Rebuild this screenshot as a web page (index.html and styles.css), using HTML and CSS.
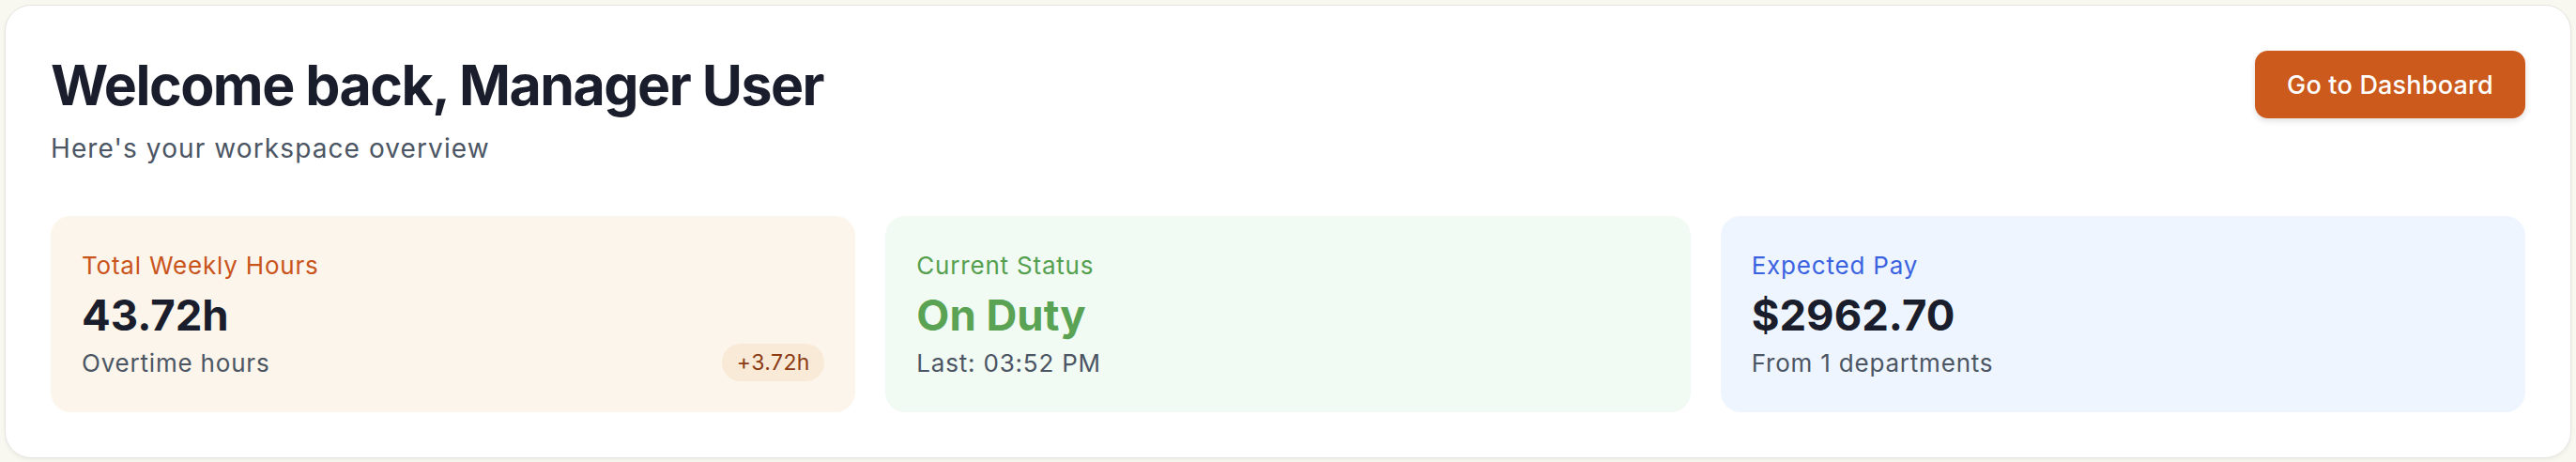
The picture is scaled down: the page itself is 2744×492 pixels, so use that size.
FILE: index.html
```html
<!DOCTYPE html>
<html lang="en">
<head>
<meta charset="utf-8">
<title>Workspace overview</title>
<link rel="stylesheet" href="styles.css">
</head>
<body>
<section class="welcome">
  <header class="welcome-head">
    <div class="welcome-text">
      <h1 class="welcome-title">Welcome back, Manager User</h1>
      <p class="welcome-sub">Here's your workspace overview</p>
    </div>
    <button class="btn-primary" type="button">Go to Dashboard</button>
  </header>
  <div class="stats">
    <div class="stat stat-orange">
      <div class="stat-label">Total Weekly Hours</div>
      <div class="stat-value">43.72h</div>
      <div class="stat-foot">
        <span class="stat-note">Overtime hours</span>
        <span class="badge">+3.72h</span>
      </div>
    </div>
    <div class="stat stat-green">
      <div class="stat-label">Current Status</div>
      <div class="stat-value">On Duty</div>
      <div class="stat-foot">
        <span class="stat-note">Last: 03:52 PM</span>
      </div>
    </div>
    <div class="stat stat-blue">
      <div class="stat-label">Expected Pay</div>
      <div class="stat-value">$2962.70</div>
      <div class="stat-foot">
        <span class="stat-note">From 1 departments</span>
      </div>
    </div>
  </div>
</section>
</body>
</html>
```

FILE: styles.css
```css
* { box-sizing: border-box; }

html, body {
  margin: 0;
  padding: 0;
}

body {
  background: #f9f8f0;
  padding: 5px;
  font-family: Inter, "Noto Sans", "Liberation Sans", sans-serif;
  color: #1a1e2c;
}

.welcome {
  background: #ffffff;
  border: 1px solid #e4e4e2;
  border-radius: 28px;
  box-shadow: 0 2px 4px rgba(0, 0, 0, 0.05);
  padding: 48px;
}

.welcome-head {
  display: flex;
  justify-content: space-between;
  align-items: flex-start;
  margin-bottom: 51px;
}

.welcome-title {
  margin: 0;
  font-size: 59px;
  line-height: 74px;
  font-weight: 700;
  letter-spacing: -1.5px;
  color: #1a1e2c;
}

.welcome-sub {
  margin: 9px 0 0;
  font-size: 28px;
  line-height: 42px;
  letter-spacing: 1.1px;
  color: #4b5563;
}

.btn-primary {
  height: 72px;
  padding: 0 34px;
  border: none;
  border-radius: 14px;
  background: #cb5a1c;
  color: #ffffff;
  font-family: inherit;
  font-size: 27px;
  font-weight: 500;
  letter-spacing: 0.2px;
  box-shadow: 0 3px 6px rgba(0, 0, 0, 0.12);
  cursor: pointer;
}

.stats {
  display: grid;
  grid-template-columns: repeat(3, 1fr);
  gap: 32px;
}

.stat {
  border-radius: 21px;
  padding: 35px 33px;
}

.stat-orange { background: #fcf5eb; }
.stat-green { background: #f1faf3; }
.stat-blue { background: #eef5fe; }

.stat-label {
  font-size: 26px;
  line-height: 35px;
  letter-spacing: 0.8px;
}

.stat-orange .stat-label { color: #c9541c; }
.stat-green .stat-label { color: #55a04f; }
.stat-blue .stat-label { color: #3b63e0; }

.stat-value {
  margin-top: 8px;
  font-size: 45.5px;
  line-height: 55px;
  font-weight: 700;
  color: #1a1e2c;
}

.stat-green .stat-value { color: #5aa354; }

.stat-foot {
  margin-top: 5.6px;
  height: 35px;
  display: flex;
  justify-content: space-between;
  align-items: center;
}

.stat-note {
  font-size: 26px;
  line-height: 35px;
  letter-spacing: 0.8px;
  color: #4b5563;
}

.badge {
  display: inline-flex;
  align-items: center;
  height: 40px;
  padding: 0 15.5px;
  border-radius: 999px;
  background: #f8ead6;
  color: #8b3a13;
  font-size: 23px;
  letter-spacing: 0.4px;
}
```
